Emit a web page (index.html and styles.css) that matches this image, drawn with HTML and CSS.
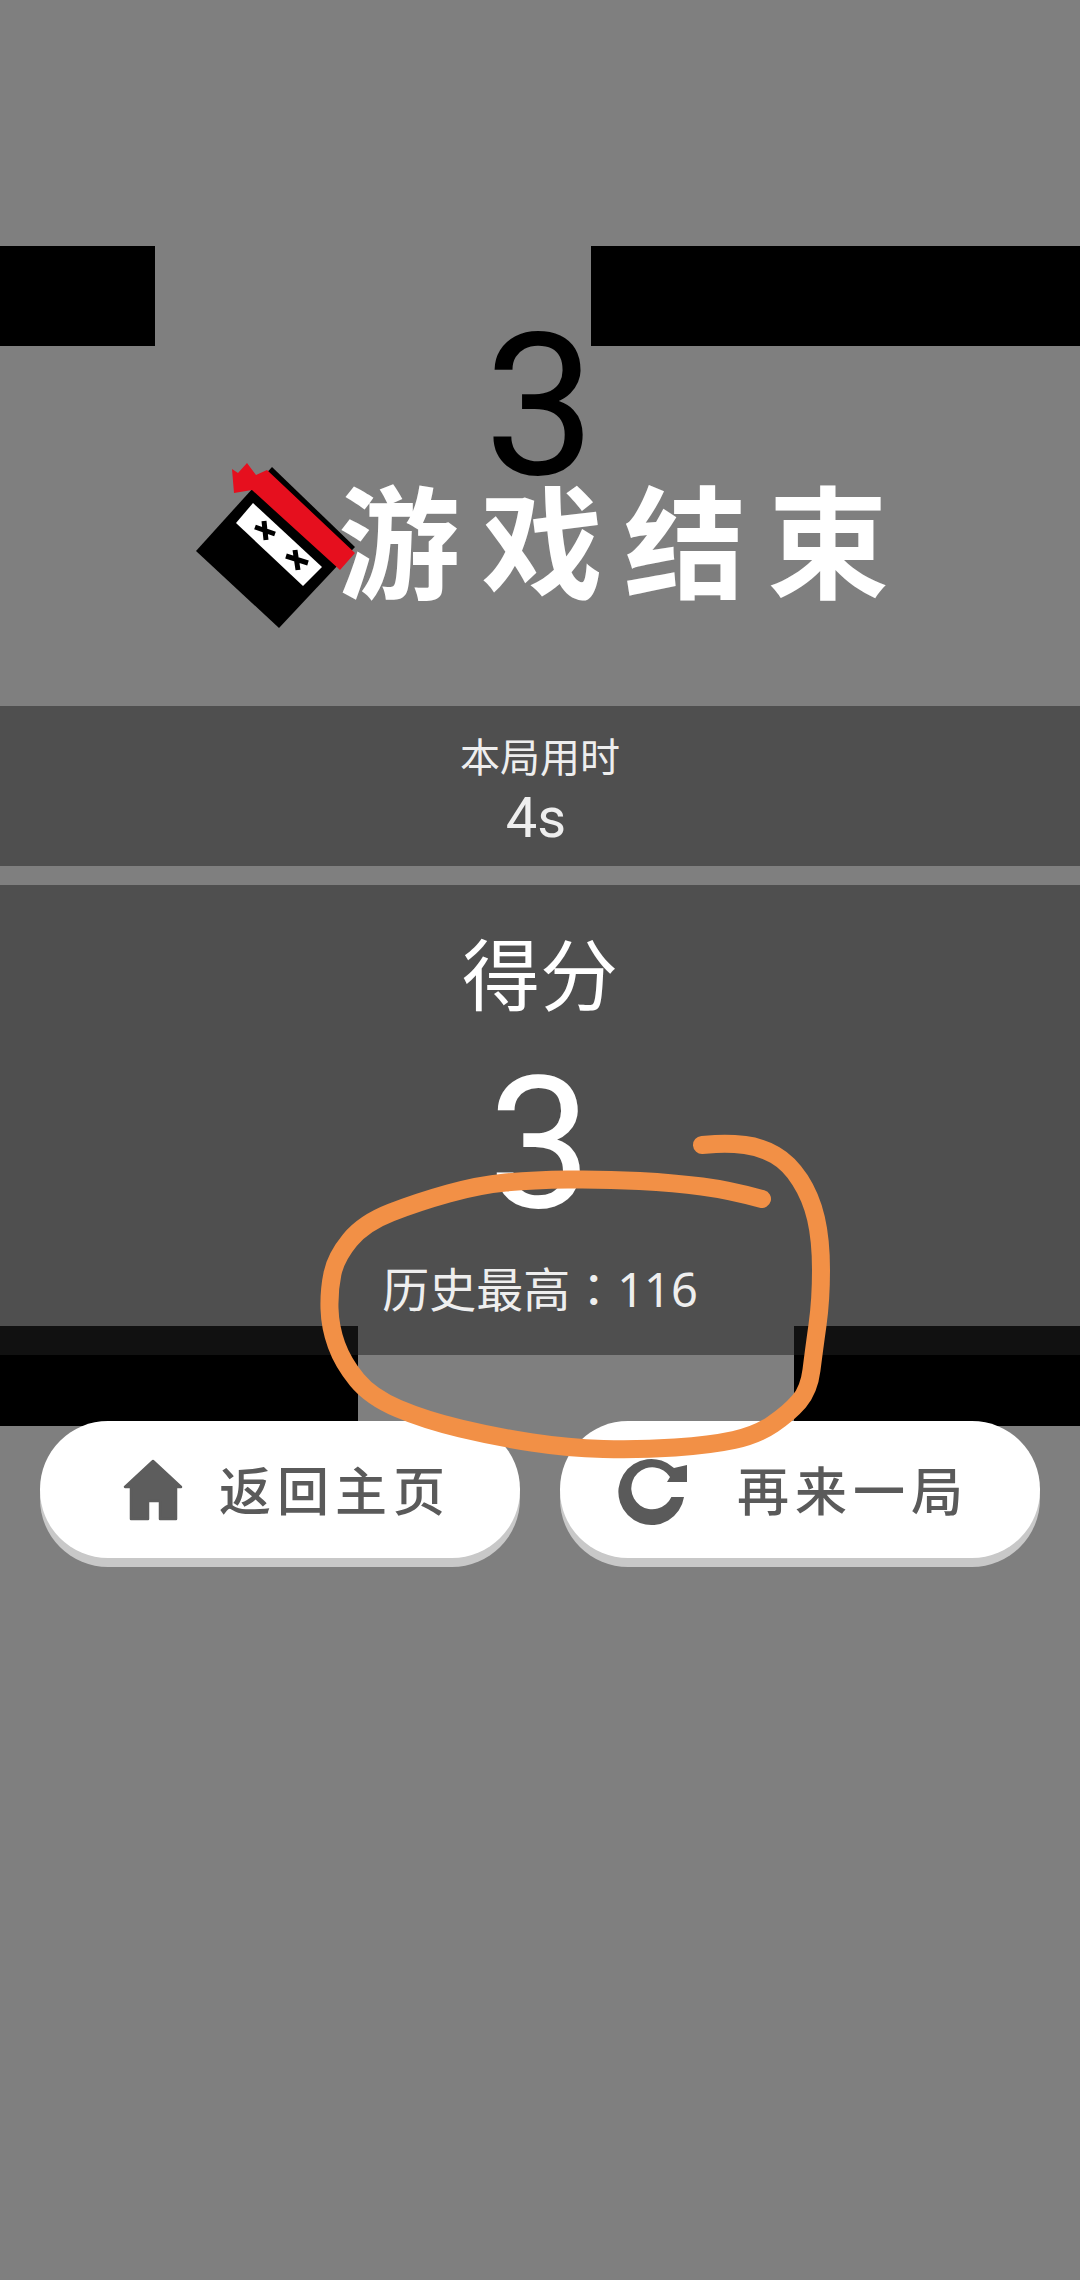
FILE: index.html
```html
<!DOCTYPE html>
<html lang="zh-CN">
<head>
<meta charset="utf-8">
<title>游戏结束</title>
<link rel="stylesheet" href="styles.css">
</head>
<body>
<main class="page">
  <div class="hero-score">3</div>
  <div class="title-row">
    <svg class="logo" viewBox="0 0 170 170" aria-hidden="true">
      <polygon points="6,91 82,7 165,87 89,168" fill="#000"/>
      <polygon points="42,9 48,13 57,3 66,15 77,10 165,93 150,110 62,30 44,33" fill="#e60f1e"/>
      <polygon points="63,43 132,107 113,126 46,63" fill="#fff"/>
      <g stroke="#000" stroke-width="5" fill="none">
        <path d="M65 67 L85 74 M74 61 L76 80"/>
        <path d="M96 96 L118 103 M105 90 L108 110"/>
      </g>
    </svg>
    <h1 class="title">游戏结束</h1>
  </div>
  <section class="panel panel-time">
    <div class="time-label">本局用时</div>
    <div class="time-value">4s</div>
  </section>
  <section class="panel panel-score">
    <div class="score-label">得分</div>
    <div class="score-value">3</div>
    <div class="score-best">历史最高<span class="colon" lang="zh-Hant">：</span>116</div>
  </section>
  <div class="actions">
    <button class="btn btn-home">
      <svg class="icon-home" viewBox="0 0 60 62" aria-hidden="true">
        <path d="M30 2 L2 28 H8 V60 H25 V42 H37 V60 H53 V28 H58 Z" fill="#5d5d5d" stroke="#5d5d5d" stroke-width="2.5" stroke-linejoin="round"/>
      </svg>
      <span class="btn-text">返回主页</span>
    </button>
    <button class="btn btn-again">
      <svg class="icon-again" viewBox="0 0 70 68" aria-hidden="true">
        <path d="M66 38 A33 33 0 1 1 56 9 L69 6 V23 H49 L52 18 A21 21 0 1 0 53.4 38 Z" fill="#5a5a5a"/>
      </svg>
      <span class="btn-text">再来一局</span>
    </button>
  </div>
  <div class="redact redact-tl"></div>
  <div class="redact redact-tr"></div>
  <div class="redact redact-bl"></div>
  <div class="redact redact-br"></div>
  <svg class="scribble" viewBox="0 0 1080 2280" aria-hidden="true">
    <path d="M702 1145 L715.5 1144 Q729 1143 745 1145 Q761 1147 775 1155 Q789 1163 800 1180 Q811 1197 816 1218.5 Q821 1240 821 1270 Q821 1300 817.5 1325 Q814 1350 811.5 1370 Q809 1390 799 1401.5 Q789 1413 773 1424 Q757 1435 734 1440 Q711 1445 675 1447.5 Q639 1450 603.5 1449 Q568 1448 532 1442.5 Q496 1437 460.5 1428.5 Q425 1420 398 1408.5 Q371 1397 357 1380 Q343 1363 336.5 1345 Q330 1327 329.5 1308.5 Q329 1290 332.5 1273.5 Q336 1257 350 1240 Q364 1223 391 1212.5 Q418 1202 448.5 1193.5 Q479 1185 505.5 1182.5 Q532 1180 568 1179.5 Q604 1179 639.5 1181 Q675 1183 702 1186.5 Q729 1190 762 1199" fill="none" stroke="#f29046" stroke-width="18" stroke-linecap="round" stroke-linejoin="round"/>
  </svg>
</main>
</body>
</html>
```
FILE: styles.css
```css
* { box-sizing: border-box; }
html, body { margin: 0; padding: 0; }
body {
  background: #7f7f7f;
  font-family: Roboto, "Noto Sans CJK SC", sans-serif;
}
.page {
  position: relative;
  display: flex;
  flex-direction: column;
  width: 1080px;
  height: 2280px;
  padding-top: 352px;
  overflow: hidden;
}
.hero-score {
  height: 108px;
  font-size: 198px;
  line-height: 108px;
  font-weight: 400;
  text-align: center;
  color: #000;
}
.title-row {
  display: flex;
  align-items: center;
  height: 170px;
  padding-left: 190px;
  margin-bottom: 76px;
}
.logo { width: 170px; height: 170px; flex: none; }
.title {
  margin: -18px 0 0 -22px;
  font-family: "Noto Sans CJK SC", sans-serif;
  font-size: 122px;
  font-weight: 700;
  letter-spacing: 21px;
  line-height: 124px;
  color: #fff;
  white-space: nowrap;
}
.panel {
  display: flex;
  flex-direction: column;
  align-items: center;
  background: #4f4f4f;
  color: #eee;
}
.panel-time { height: 160px; margin-bottom: 19px; padding-top: 21px; }
.time-label {
  font-family: "Noto Sans CJK SC", sans-serif;
  font-size: 40px;
  line-height: 56px;
}
.time-value { font-size: 56px; line-height: 60px; margin-top: 5px; padding-right: 8px; }
.panel-score { height: 470px; margin-bottom: 66px; padding-top: 33px; }
.score-label {
  font-family: "Noto Sans CJK SC", sans-serif;
  font-size: 78px;
  line-height: 106px;
  color: #fff;
}
.score-value {
  font-size: 184px;
  line-height: 180px;
  margin-top: 30px;
  color: #fff;
}
.score-best {
  font-family: "Noto Sans", "Noto Sans CJK SC", sans-serif;
  font-size: 47px;
  line-height: 60px;
  margin-top: 23px;
}
.colon { font-family: "Noto Sans CJK TC", sans-serif; }
.actions {
  position: relative;
  z-index: 2;
  display: flex;
  gap: 40px;
  padding: 0 40px;
}
.btn {
  display: flex;
  align-items: center;
  width: 480px;
  height: 137px;
  border: 0;
  border-radius: 68px;
  background: #fff;
  box-shadow: 0 9px 0 #c8c8c8;
  color: #5a5a5a;
  font-family: "Noto Sans CJK SC", sans-serif;
  font-size: 52px;
  font-weight: 500;
  letter-spacing: 6px;
}
.btn-home { padding: 0 0 0 83px; }
.btn-again { padding: 0 0 0 58px; }
.icon-home { width: 60px; height: 62px; margin-right: 36px; flex: none; }
.icon-again { width: 70px; height: 68px; margin-right: 49px; flex: none; margin-top: 6px; }
.btn-text { white-space: nowrap; margin-top: -3px; }
.redact { position: absolute; z-index: 1; background: #000; }
.redact-tl { left: 0; top: 246px; width: 155px; height: 100px; }
.redact-tr { left: 591px; top: 246px; width: 489px; height: 100px; }
.redact-bl, .redact-br {
  top: 1326px;
  height: 100px;
  background: linear-gradient(#111 29px, #000 29px);
}
.redact-bl { left: 0; width: 358px; }
.redact-br { left: 794px; width: 286px; }
.scribble { position: absolute; z-index: 3; left: 0; top: 0; width: 1080px; height: 2280px; pointer-events: none; }
```
